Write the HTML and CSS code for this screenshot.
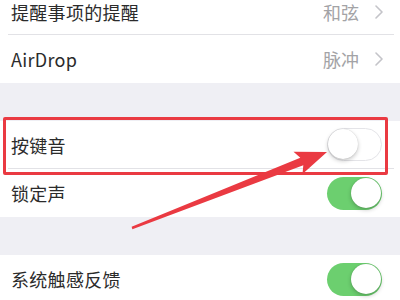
FILE: index.html
```html
<!DOCTYPE html>
<html lang="zh">
<head>
<meta charset="utf-8">
<link rel="stylesheet" href="styles.css">
</head>
<body>
<div class="screen">
  <div class="group first">
    <div class="row top">
      <div class="cell sep">
        <span class="label">提醒事项的提醒</span>
        <span class="value">和弦</span>
        <svg class="chev" width="8" height="14" viewBox="0 0 8 14"><path d="M1 1 L7 7 L1 13" fill="none" stroke="#c4c4c9" stroke-width="1.6" stroke-linecap="round" stroke-linejoin="round"/></svg>
      </div>
    </div>
    <div class="row">
      <div class="cell">
        <span class="label">AirDrop</span>
        <span class="value">脉冲</span>
        <svg class="chev" width="8" height="14" viewBox="0 0 8 14"><path d="M1 1 L7 7 L1 13" fill="none" stroke="#c4c4c9" stroke-width="1.6" stroke-linecap="round" stroke-linejoin="round"/></svg>
      </div>
    </div>
  </div>
  <div class="gap"></div>
  <div class="group">
    <div class="row">
      <div class="cell sep">
        <span class="label">按键音</span>
        <span class="toggle off"><span class="knob"></span></span>
      </div>
    </div>
    <div class="row">
      <div class="cell">
        <span class="label">锁定声</span>
        <span class="toggle on"><span class="knob"></span></span>
      </div>
    </div>
  </div>
  <div class="gap"></div>
  <div class="group">
    <div class="row">
      <div class="cell">
        <span class="label">系统触感反馈</span>
        <span class="toggle on"><span class="knob"></span></span>
      </div>
    </div>
  </div>
  <div class="highlight"></div>
  <svg class="arrow" width="400" height="300" viewBox="0 0 400 300">
    <polygon points="131.6,226.8 300.3,157.8 293.5,151.8 327,152 302.5,174 303.3,165.2 132.4,229.2" fill="#ea3a42"/>
  </svg>
</div>
</body>
</html>
```
FILE: styles.css
```css
html, body {
  margin: 0;
  padding: 0;
}
body {
  background: #efeff4;
  font-family: "Noto Sans CJK SC", "Noto Sans", sans-serif;
  -webkit-font-smoothing: antialiased;
}
.screen {
  position: relative;
  width: 400px;
  height: 300px;
  overflow: hidden;
  background: #efeff4;
}
.group {
  background: #fff;
}
.group.first {
  margin-top: -10px;
}
.gap {
  height: 38px;
}
.row {
  height: 48px;
  padding: 0 6px 0 8px;
}
.cell {
  box-sizing: border-box;
  height: 48px;
  display: flex;
  align-items: center;
  padding: 0 12px 0 3px;
}
.row.top,
.row.top .cell {
  height: 45px;
}
.cell.sep {
  border-bottom: 1px solid #e2e2e6;
}
.label {
  flex: 1;
  font-size: 18px;
  color: #2b2b2b;
  letter-spacing: 0.3px;
}
.value {
  font-size: 18px;
  color: #a3a3a6;
  margin-right: 16px;
}
.chev {
  margin-right: -1px;
}
.toggle {
  position: relative;
  box-sizing: border-box;
  width: 55px;
  height: 33px;
  border-radius: 17px;
}
.toggle.off {
  background: #fff;
  border: 1.5px solid #e4e4e8;
}
.toggle.on {
  background: #6ccf6f;
}
.knob {
  position: absolute;
  top: 1.5px;
  width: 30px;
  height: 30px;
  border-radius: 50%;
  background: #fff;
  box-shadow: 0 2px 4px rgba(0,0,0,0.22), 0 0 1px rgba(0,0,0,0.2);
}
.toggle.off .knob {
  top: 0;
  left: 0;
}
.toggle.on .knob {
  right: 1.5px;
}
.highlight {
  position: absolute;
  left: 3px;
  top: 117px;
  width: 379px;
  height: 52px;
  border: 3px solid #ea3a42;
  border-radius: 2px;
}
.arrow {
  position: absolute;
  left: 0;
  top: 0;
}
```
